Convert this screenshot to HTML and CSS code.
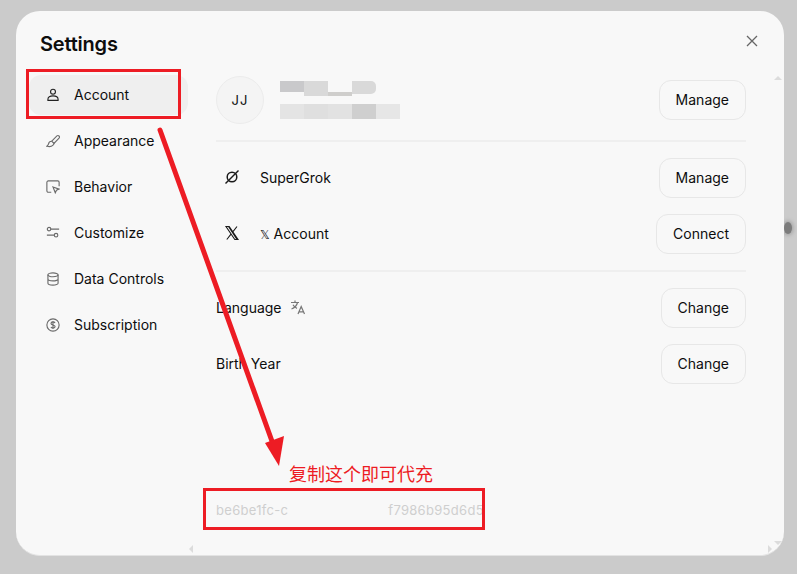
FILE: index.html
```html
<!DOCTYPE html>
<html lang="en">
<head>
<meta charset="utf-8">
<title>Settings</title>
<link rel="stylesheet" href="styles.css">
</head>
<body>
<div class="backdrop-smudge"></div>
<section class="modal">
  <header class="modal-head">
    <h1 class="title">Settings</h1>
    <button class="close" aria-label="Close">
      <svg viewBox="0 0 12 12" class="close-icon"><path d="M1 1l10 10M11 1L1 11"/></svg>
    </button>
  </header>
  <div class="modal-body">
    <nav class="nav">
      <a class="nav-item active">
        <svg class="nav-icon dark" viewBox="0 0 16 16"><circle cx="8" cy="4.2" r="2.8"/><path d="M2.2 14.2h11.6v-1.4c0-2.4-2.2-3.8-5.8-3.8s-5.8 1.4-5.8 3.8z"/></svg>
        <span>Account</span>
      </a>
      <a class="nav-item">
        <svg class="nav-icon" viewBox="0 0 16 16"><path d="M6.6 8.2l5.9-6a1.7 1.7 0 0 1 2.4 2.4l-5.8 6.1z"/><path d="M6.5 8.3c-2 .1-3.3 1.3-3.6 3-.2 1-.8 1.8-1.9 2.7 2.6.6 5.6.2 7-1.2 1-1 1.2-1.9 1-2.5"/></svg>
        <span>Appearance</span>
      </a>
      <a class="nav-item">
        <svg class="nav-icon" viewBox="0 0 16 16"><path d="M6 14H2.6A1.6 1.6 0 0 1 1 12.4V2.6A1.6 1.6 0 0 1 2.6 1h10.8A1.6 1.6 0 0 1 15 2.6V7"/><path d="M8 8l7 2.4-3 1.2-1.400 3z"/></svg>
        <span>Behavior</span>
      </a>
      <a class="nav-item">
        <svg class="nav-icon" viewBox="0 0 16 16"><circle cx="3.500" cy="3.500" r="2"/><circle cx="11.500" cy="10.500" r="2"/><path d="M5.500 3.500H15M1 10.500h8.500"/></svg>
        <span>Customize</span>
      </a>
      <a class="nav-item">
        <svg class="nav-icon" viewBox="0 0 16 16"><ellipse cx="8" cy="3.200" rx="5.800" ry="2.200"/><path d="M2.200 3.200v9.600c0 1.200 2.600 2.200 5.800 2.200s5.800-1 5.800-2.200V3.200M2.200 8c0 1.200 2.600 2.200 5.800 2.200s5.800-1 5.800-2.200"/></svg>
        <span>Data Controls</span>
      </a>
      <a class="nav-item">
        <svg class="nav-icon" viewBox="0 0 16 16"><circle cx="8" cy="8" r="7"/><path d="M10.300 5.700C9.900 4.900 9 4.500 8 4.500c-1.300 0-2.300.7-2.300 1.700 0 2.300 4.700 1.200 4.700 3.600 0 1-1 1.700-2.400 1.700-1.100 0-2-.5-2.400-1.300M8 3.400v9.200"/></svg>
        <span>Subscription</span>
      </a>
    </nav>
    <main class="content">
      <div class="row profile">
        <div class="who">
          <div class="avatar">JJ</div>
          <div class="mosaic">
            <div class="mosaic-line name">
              <i class="m m1"></i><i class="m m2"></i><i class="m m3"></i><i class="m m4"></i>
            </div>
            <div class="mosaic-line mail">
              <i class="m m5"></i><i class="m m6"></i><i class="m m7"></i><i class="m m8"></i><i class="m m9"></i>
            </div>
          </div>
        </div>
        <button class="btn">Manage</button>
      </div>
      <hr class="rule">
      <div class="group">
        <div class="row">
          <div class="label">
            <svg class="row-icon" viewBox="0 0 16 16"><circle cx="8" cy="8" r="4.800"/><path d="M1.500 14.500L14.500 1.500"/></svg>
            <span>SuperGrok</span>
          </div>
          <button class="btn">Manage</button>
        </div>
        <div class="row">
          <div class="label">
            <svg class="row-icon x" viewBox="0 0 16 16"><path d="M2 1.500h3.200L14 14.500h-3.200zM4.500 1.500L13 14.500M13 1.500L9.200 6.300M7 9.200L2.800 14.500"/></svg>
            <span><span class="dbl">𝕏</span> Account</span>
          </div>
          <button class="btn">Connect</button>
        </div>
      </div>
      <hr class="rule">
      <div class="group">
        <div class="row">
          <div class="plain">
            <span>Language</span>
            <svg class="lang-icon" viewBox="0 0 16 16"><path d="M1 3.500h8M5 1.500v2M7.500 3.500C6.800 6.500 4.500 9 1.500 10M3 5.800c.8 1.600 2.200 2.900 4 3.600M8 15l3.200-7.500L14.500 15M9 12.800h4.500"/></svg>
          </div>
          <button class="btn">Change</button>
        </div>
        <div class="row">
          <div class="plain"><span>Birth Year</span></div>
          <button class="btn">Change</button>
        </div>
      </div>
      <div class="id-line">
        <span>be6be1fc-c</span><span class="id-hidden"></span><span>f7986b95d6d5</span>
      </div>
    </main>
  </div>
  <i class="scroll up"></i>
  <i class="scroll down"></i>
  <i class="scroll left"></i>
  <i class="scroll right"></i>
</section>

<div class="mark mark-account"></div>
<div class="mark mark-id"></div>
<div class="mark-note">复制这个即可代充</div>
<svg class="mark-arrow" viewBox="0 0 797 574">
  <path class="shaft" d="M160 130L273 444"/>
  <path class="head" d="M279 466L265 443 284 436z"/>
</svg>
</body>
</html>
```

FILE: styles.css
```css
* { box-sizing: border-box; }

html, body { height: 100%; }

body {
  margin: 0;
  padding: 11px 13px 18px 16px;
  background: #cbcbcb;
  font-family: Inter, "Noto Sans", sans-serif;
  font-size: 14px;
  color: #0d0d0d;
  overflow: hidden;
}

.backdrop-smudge {
  position: absolute;
  left: 784px;
  top: 222px;
  width: 8px;
  height: 12px;
  border-radius: 50%;
  background: #7c7c7c;
  box-shadow: 0 0 4px 1px #9a9a9a;
}

.modal {
  position: relative;
  display: flex;
  flex-direction: column;
  width: 768px;
  height: 545px;
  background: #f8f8f8;
  border-radius: 24px;
  border-bottom: 1px solid #e3e3e3;
}

.modal-head {
  display: flex;
  justify-content: space-between;
  align-items: center;
  height: 58px;
  padding: 7px 26px 0 24px;
  flex: none;
}

.title {
  margin: 0;
  font-size: 20px;
  line-height: 28px;
  font-weight: 600;
  letter-spacing: -0.2px;
  color: #0d0d0d;
}

.close {
  display: flex;
  padding: 0;
  border: 0;
  background: none;
  margin-top: -5px;
}

.close-icon {
  width: 12px;
  height: 12px;
  fill: none;
  stroke: #666;
  stroke-width: 1.3;
}

.modal-body {
  display: flex;
  flex: 1;
  min-height: 0;
}

.nav {
  display: flex;
  flex-direction: column;
  gap: 6px;
  flex: none;
  width: 172px;
  margin-left: 13px;
  padding-top: 6px;
}

.nav-item {
  display: flex;
  align-items: center;
  gap: 14px;
  width: 159px;
  height: 40px;
  padding-left: 17px;
  border-radius: 12px;
  line-height: 20px;
}

.nav-item.active { background: #efefef; }

.nav-icon {
  flex: none;
  width: 14px;
  height: 14px;
  fill: none;
  stroke: #6b6b6b;
  stroke-width: 1.3;
}

.nav-icon.dark { stroke: #222; }

.content {
  display: flex;
  flex-direction: column;
  flex: none;
  width: 530px;
  margin-left: 15px;
}

.row {
  display: flex;
  justify-content: space-between;
  align-items: center;
}

.profile {
  height: 48px;
  margin-top: 7px;
}

.who {
  display: flex;
  align-items: center;
  gap: 16px;
}

.avatar {
  display: flex;
  align-items: center;
  justify-content: center;
  width: 48px;
  height: 48px;
  border: 1px solid #ececec;
  border-radius: 50%;
  background: #f4f4f4;
  font-size: 13px;
  letter-spacing: 1px;
}

.mosaic {
  display: flex;
  flex-direction: column;
  gap: 8px;
}

.mosaic-line { display: flex; }

.m {
  display: block;
  width: 24px;
}

.name { height: 15px; }
.mail { height: 15px; }

.m1 { height: 11px; background: #c9c9cb; }
.m2 { height: 15px; background: #d9d9d9; }
.m3 { height: 15px; background: linear-gradient(#f8f8f8 0 11px, #cfcecc 11px); }
.m4 { height: 13px; background: #d9d9d9; border-top-right-radius: 5px; border-bottom-right-radius: 5px; }
.m5 { height: 15px; background: #e4e4e4; }
.m6 { height: 15px; background: #dfdfdf; }
.m7 { height: 15px; background: #e2e2e2; }
.m8 { height: 15px; background: #cfcfcf; }
.m9 { height: 15px; background: #e6e6e6; }

.rule {
  width: 100%;
  height: 2px;
  margin: 16px 0;
  border: 0;
  background: #efefef;
  flex: none;
}

.group {
  display: flex;
  flex-direction: column;
  gap: 16px;
}

.label {
  display: flex;
  align-items: center;
  gap: 20px;
  padding-left: 8px;
  margin-top: -2px;
}

.plain {
  display: flex;
  align-items: center;
  gap: 8px;
  margin-top: -2px;
}

.row-icon {
  flex: none;
  width: 16px;
  height: 16px;
  fill: none;
  stroke: #1a1a1a;
  stroke-width: 1.500;
}

.row-icon.x { stroke-width: 1.100; }

.dbl {
  font-family: "DejaVu Sans", sans-serif;
  font-size: 12px;
}

.lang-icon {
  flex: none;
  width: 16px;
  height: 16px;
  fill: none;
  stroke: #777;
  stroke-width: 1.200;
}

.btn {
  height: 40px;
  padding: 0 16px;
  border: 1px solid #e7e7e7;
  border-radius: 12px;
  background: #f8f8f8;
  font: 14px/20px Inter, "Noto Sans", sans-serif;
  color: #0d0d0d;
}

.id-line {
  display: flex;
  align-items: center;
  margin-top: 116px;
  font-size: 13px;
  line-height: 20px;
  letter-spacing: 0.3px;
  color: #cfcfcf;
}

.id-hidden {
  width: 100px;
  height: 16px;
}

.scroll {
  position: absolute;
  width: 0;
  height: 0;
  border: 4px solid transparent;
}

.scroll.up { right: 2px; top: 65px; border-top: 0; border-bottom: 4px solid #dcdcdc; }
.scroll.down { right: 2px; bottom: 10px; border-bottom: 0; border-top: 4px solid #dcdcdc; }
.scroll.left { left: 173px; bottom: 2px; border-left: 0; border-right: 4px solid #dcdcdc; }
.scroll.right { right: 12px; bottom: 2px; border-right: 0; border-left: 4px solid #dcdcdc; }

.mark {
  position: absolute;
  border: 3px solid #ed1c24;
}

.mark-account {
  left: 26px;
  top: 69px;
  width: 155px;
  height: 50px;
}

.mark-id {
  left: 203px;
  top: 488px;
  width: 282px;
  height: 42px;
}

.mark-note {
  position: absolute;
  left: 289px;
  top: 461px;
  font-family: "Noto Sans CJK SC", sans-serif;
  font-size: 18px;
  line-height: 24px;
  color: #ed1c24;
}

.mark-arrow {
  position: absolute;
  left: 0;
  top: 0;
  width: 797px;
  height: 574px;
  pointer-events: none;
}

.shaft {
  fill: none;
  stroke: #ed1c24;
  stroke-width: 5;
  stroke-linecap: round;
}

.head { fill: #ed1c24; }
```
